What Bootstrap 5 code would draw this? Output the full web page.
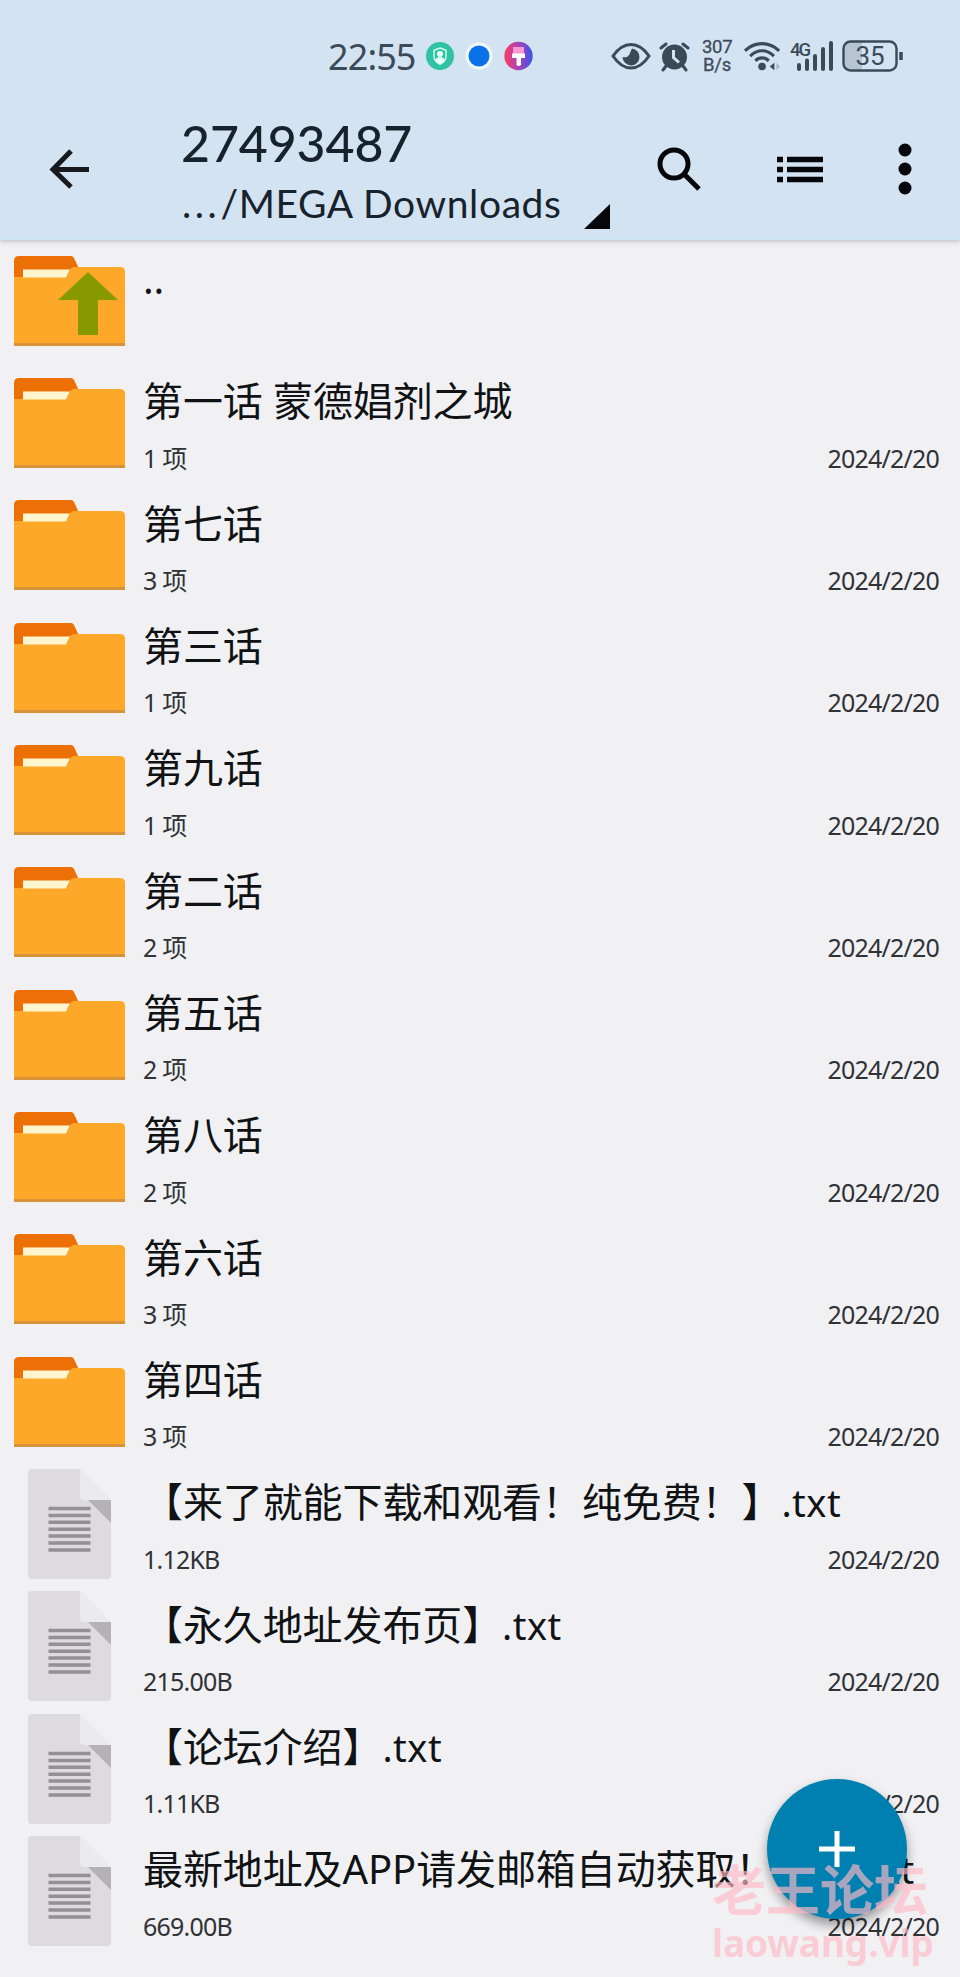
<!DOCTYPE html>
<html lang="zh-CN">
<head>
<meta charset="utf-8">
<meta name="viewport" content="width=device-width, initial-scale=1">
<title>27493487</title>
<link href="https://cdn.jsdelivr.net/npm/bootstrap@5.3.0/dist/css/bootstrap.min.css" rel="stylesheet">
<style>
  body { background: #f1f1f4; font-family: "Noto Sans", "Noto Sans CJK SC", sans-serif; color: #15171a; }
  .screen { width: 960px; height: 1977px; }
  .top-area { height: 239.5px; background: #d3e3f2; box-shadow: 0 1px 5px rgba(70, 80, 90, .35); border-bottom: 3px solid #cce5f5; z-index: 2; }
  .status-bar { height: 112px; padding-left: 328px; padding-right: 56px; color: #3c4a58; }
  .clock { font: 400 36px/1 "Noto Sans", sans-serif; letter-spacing: -.9px; width: 98px; padding-top: 2px; }
  .net-speed { font: 400 18.5px/18px Roboto, sans-serif; width: 34px; letter-spacing: -.3px; -webkit-text-stroke: .3px #3c4a58; }
  .app-bar { height: 124px; }
  .back-cell { width: 181px; padding-left: 49px; padding-top: 36px; }
  .path-cell { width: 430px; padding-top: 4px; color: #17222c; }
  .folder-title { font: 500 50px/54px Lato, sans-serif; letter-spacing: -.1px; }
  .folder-path { font: 400 39px/54px Lato, sans-serif; letter-spacing: .6px; margin-top: 6px; }
  .folder-path .dots { letter-spacing: 3.6px; padding-left: 1px; }
  .corner { margin-bottom: -1px; }
  .action-cell { height: 114px; margin-left: 46px; }
  .file-row { height: 122.33px; padding-right: 21px; }
  .icon-cell { width: 143px; padding-left: 14px; }
  .doc-icon { margin-left: 14px; }
  .file-name { font-size: 40px; line-height: 50px; margin-top: 14.5px; white-space: nowrap; letter-spacing: -.1px; color: #101214; }
  .file-name .ext { font-size: 38px; letter-spacing: .5px; }
  .file-meta { font-size: 25px; line-height: 32px; margin-top: 15.5px; letter-spacing: -.8px; color: #303236; }
  .fab { width: 140px; height: 140px; left: 767px; top: 1779px; background: #0080b1; box-shadow: 0 6px 11px rgba(0, 0, 0, .38); z-index: 3; }
  .watermark { left: 712px; top: 1855px; color: rgba(255, 185, 198, .66); z-index: 4; }
  .watermark-cn { font: 700 54px/66px "Noto Sans CJK SC", sans-serif; }
  .watermark-url { font: 700 37px/44px "Noto Sans", sans-serif; letter-spacing: -.1px; }
</style>
</head>
<body>
<svg class="d-none">
  <symbol id="ico-folder" viewBox="0 0 111 90">
    <path d="M0 24V5Q0 0 5 0H57Q59 0 60 2L66 15V24Z" fill="#ed7006"/>
    <path d="M0 21H50Q53 21 54 18L56 14Q57 11 61 11H106Q111 11 111 16V90H0Z" fill="#fda828"/>
    <path d="M9 13.500H56L52 21.500H9Z" fill="#fff6d0"/>
    <path d="M0 87H111V90H0Z" fill="#d8923a"/>
  </symbol>
  <symbol id="ico-doc" viewBox="0 0 83 110">
    <path d="M4 0H52L83 31V106Q83 110 79 110H4Q0 110 0 106V4Q0 0 4 0Z" fill="#dddbde"/>
    <path d="M52 0L83 31H56Q52 31 52 27Z" fill="#ebeaec"/>
    <path d="M60 31H83V54Z" fill="#b4b2b5"/>
    <path d="M20.500 39.500h42M20.500 46.400h42M20.500 53.300h42M20.500 60.200h42M20.500 67.100h42M20.500 74h42M20.500 80.900h42" stroke="#929094" stroke-width="3.500"/>
  </symbol>
</svg>

<div class="screen position-relative overflow-hidden">
  <header class="top-area position-relative">
    <div class="status-bar d-flex align-items-center">
      <span class="clock">22:55</span>
      <svg width="110" height="30" viewBox="0 0 110 30">
        <circle cx="14" cy="15" r="14" fill="#2fc3a3"/>
        <path d="M14 7l6 2.300v6q0 5-6 8-6-3-6-8v-6z" fill="none" stroke="#d5fff4" stroke-width="1.400"/>
        <circle cx="14" cy="13" r="3" fill="#e4fff8"/><path d="M9 20q1-4 5-4t5 4q-2 2-5 3-3-1-5-3z" fill="#e4fff8"/>
        <circle cx="53" cy="15" r="13.500" fill="#f2f9fc"/><circle cx="53" cy="15" r="10.500" fill="#0872e6"/>
        <defs><linearGradient id="brush"><stop offset=".1" stop-color="#ee3b74"/><stop offset=".55" stop-color="#a044bd"/><stop offset="1" stop-color="#3557e6"/></linearGradient></defs>
        <circle cx="92.500" cy="15" r="14.200" fill="url(#brush)"/>
        <path d="M87 6h11v7H87z" fill="#f79bd2"/><path d="M86 12.500h13V17h-4v7q-2.500 2-4.500 0v-7H86z" fill="#fff"/>
      </svg>
      <div class="ms-auto d-flex align-items-center">
        <svg width="40" height="30" viewBox="0 0 40 30">
          <path d="M2 15Q10 3.500 20 3.500T38 15Q30 27 20 27T2 15Z" fill="none" stroke="#3c4a58" stroke-width="3"/>
          <path d="M21 7.500a8.500 8.500 0 1 1-9.500 8.500q5 1 7-2.500 1-3 2.500-6z" fill="#3c4a58"/>
        </svg>
        <svg class="ms-2" width="31" height="31" viewBox="0 0 31 31">
          <circle cx="15.500" cy="16" r="12.500" fill="#3c4a58"/>
          <path d="M2 7L7 3M29 7L24 3M7 25l-3 4M24 25l3 4" stroke="#3c4a58" stroke-width="3" stroke-linecap="round"/>
          <path d="M14.500 9v7.500l5.500 5" fill="none" stroke="#d3e3f2" stroke-width="3"/>
        </svg>
        <div class="net-speed ms-2 ps-1 text-center">307<br>B/s</div>
        <svg class="ms-2 ps-1 me-1" width="42" height="31" viewBox="0 0 40 31">
          <g fill="none" stroke="#3c4a58" stroke-width="3.300"><path d="M1 9.500Q9 2 19 2t18 7.500"/><path d="M6.500 15Q12 9.500 19 9.500t12.500 5.500"/><path d="M12 20q3-3 7-3t7 3"/></g>
          <circle cx="19" cy="26" r="4" fill="#3c4a58"/><path d="M32 22v8l-5-4z" fill="#3c4a58"/><path d="M34 22v8l4-4z" fill="#aebdcb"/>
        </svg>
        <svg class="ms-1 overflow-visible" width="44" height="32" viewBox="0 0 44 32">
          <text x="0" y="16" font-family="Roboto" font-size="18.500" font-weight="500" fill="#3c4a58" textLength="21">4G</text>
          <path d="M9 25v4M17 20.500V29M25 16V29M33 9V29M41 3V29" stroke="#3c4a58" stroke-width="4" stroke-linecap="round"/>
        </svg>
        <svg class="ms-2" width="62" height="32" viewBox="0 0 62 32">
          <path d="M2 9Q2 2 9 2H20V30H9Q2 30 2 23Z" fill="#b6c5d4"/>
          <rect x="1.500" y="1.500" width="53" height="29" rx="7" fill="none" stroke="#3c4a58" stroke-width="2.400"/>
          <path d="M59 12v8" stroke="#3c4a58" stroke-width="3.500"/>
          <text x="28" y="25" text-anchor="middle" font-family="Roboto" font-size="26" fill="#3c4a58" textLength="29">35</text>
        </svg>
      </div>
    </div>
    <nav class="app-bar d-flex align-items-start">
      <div class="back-cell">
        <svg class="d-block" width="42" height="42" viewBox="0 0 42 42"><path d="M22 3L4 21.500 22 39M4 21.500H40" fill="none" stroke="#17191c" stroke-width="5"/></svg>
      </div>
      <div class="path-cell d-flex">
        <div>
          <div class="folder-title">27493487</div>
          <div class="folder-path"><span class="dots">...</span>/MEGA Downloads</div>
        </div>
        <svg class="corner align-self-end ms-auto" width="28" height="28" viewBox="0 0 28 28"><path d="M27 1V26H1Z" fill="#05070a"/></svg>
      </div>
      <div class="action-cell flex-grow-1 d-flex align-items-center justify-content-between pe-5">
        <svg width="44" height="44" viewBox="0 0 44 44"><circle cx="17" cy="17" r="14" fill="none" stroke="#05070a" stroke-width="5"/><path d="M27 27L42 42" stroke="#05070a" stroke-width="5"/></svg>
        <svg width="46" height="27" viewBox="0 0 46 27"><path d="M0 3.500h6M10 3.500h36M0 13.500h6M10 13.500h36M0 23.500h6M10 23.500h36" stroke="#05070a" stroke-width="5.400"/></svg>
        <svg width="14" height="52" viewBox="0 0 14 52"><g fill="#05070a"><circle cx="7" cy="7" r="6.500"/><circle cx="7" cy="26" r="6.500"/><circle cx="7" cy="45" r="6.500"/></g></svg>
      </div>
    </nav>
  </header>

  <main id="files"></main>

  <button class="fab btn border-0 rounded-circle position-absolute d-flex align-items-center justify-content-center p-0" aria-label="新建">
    <svg width="36" height="36" viewBox="0 0 36 36"><path d="M18 0V36M0 18H36" stroke="#fff" stroke-width="5"/></svg>
  </button>
  <div class="watermark position-absolute">
    <div class="watermark-cn">老王论坛</div>
    <div class="watermark-url">laowang.vip</div>
  </div>
</div>

<script src="https://cdn.jsdelivr.net/npm/bootstrap@5.3.0/dist/js/bootstrap.bundle.min.js"></script>
<script>
  const date = '2024/2/20';
  const folders = [
    ['第一话 蒙德娼剂之城', 1], ['第七话', 3], ['第三话', 1], ['第九话', 1], ['第二话', 2],
    ['第五话', 2], ['第八话', 2], ['第六话', 3], ['第四话', 3]
  ];
  const docs = [
    ['【来了就能下载和观看！纯免费！】', '1.12KB'], ['【永久地址发布页】', '215.00B'],
    ['【论坛介绍】', '1.11KB'], ['最新地址及APP请发邮箱自动获取！！！', '669.00B']
  ];
  const folderIcon = up => `<svg width="111" height="90" viewBox="0 0 111 90"><use href="#ico-folder"/>${up ? '<path d="M74 16L104 44H84V79H64V44H44Z" fill="#869a00"/>' : ''}</svg>`;
  const docIcon = '<svg class="doc-icon" width="83" height="110"><use href="#ico-doc"/></svg>';
  const row = (icon, name, meta, when) => `
    <div class="file-row d-flex">
      <div class="icon-cell d-flex align-items-center flex-shrink-0">${icon}</div>
      <div class="flex-grow-1">
        <div class="file-name">${name}</div>
        <div class="file-meta d-flex justify-content-between"><span>${meta}</span><span>${when}</span></div>
      </div>
    </div>`;
  document.getElementById('files').innerHTML =
    row(folderIcon(true), '..', '', '') +
    folders.map(([n, c]) => row(folderIcon(false), n, c + ' 项', date)).join('') +
    docs.map(([n, s]) => row(docIcon, n + '<span class="ext">.txt</span>', s, date)).join('');
</script>
</body>
</html>
